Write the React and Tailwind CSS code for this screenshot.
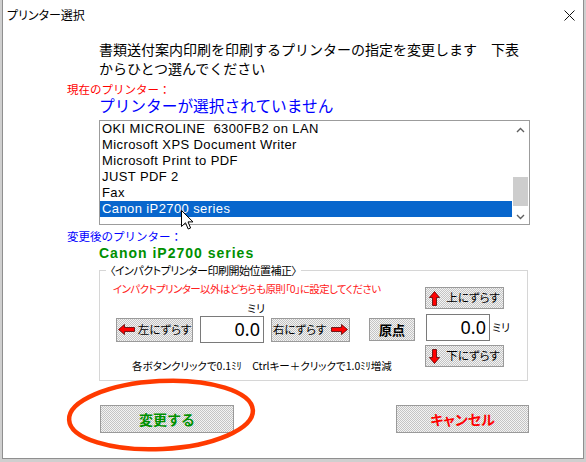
import React from "react";

const btnBase =
  "flex items-center justify-center whitespace-nowrap border border-[#9a9a9a] bg-[repeating-conic-gradient(#c4c4c4_0%_25%,#f3f3f3_0%_50%)] bg-[length:2px_2px]";

function ArrowLeft() {
  return (
    <svg width="17" height="11" viewBox="0 0 17 11" className="shrink-0">
      <polygon points="0.5,5.5 6.5,0.5 6.5,3.5 16.5,3.5 16.5,7.5 6.5,7.5 6.5,10.5" fill="#ff0000" stroke="#5a0000" strokeWidth="0.8" />
    </svg>
  );
}
function ArrowRight() {
  return (
    <svg width="17" height="11" viewBox="0 0 17 11" className="shrink-0">
      <polygon points="16.5,5.5 10.5,0.5 10.5,3.5 0.5,3.5 0.5,7.5 10.5,7.5 10.5,10.5" fill="#ff0000" stroke="#5a0000" strokeWidth="0.8" />
    </svg>
  );
}
function ArrowUp() {
  return (
    <svg width="11" height="15" viewBox="0 0 11 15" className="shrink-0">
      <polygon points="5.5,0.5 10.5,6.5 7.5,6.5 7.5,14.5 3.5,14.5 3.5,6.5 0.5,6.5" fill="#ff0000" stroke="#5a0000" strokeWidth="0.8" />
    </svg>
  );
}
function ArrowDown() {
  return (
    <svg width="11" height="15" viewBox="0 0 11 15" className="shrink-0">
      <polygon points="5.5,14.5 10.5,8.5 7.5,8.5 7.5,0.5 3.5,0.5 3.5,8.5 0.5,8.5" fill="#ff0000" stroke="#5a0000" strokeWidth="0.8" />
    </svg>
  );
}

const items = [
  "OKI MICROLINE\u00a0 6300FB2 on LAN",
  "Microsoft XPS Document Writer",
  "Microsoft Print to PDF",
  "JUST PDF 2",
  "Fax",
  "Canon iP2700 series",
];

export default function App() {
  return (
    <div className="relative w-[586px] h-[462px] overflow-hidden bg-[#cfcfcf] font-['Noto_Sans_CJK_JP',sans-serif] text-black">
      <div className="ml-[2px] w-[582px] h-[459px] bg-white border-l border-r border-b border-[#8f8f8f] flex flex-col">
        {/* title bar */}
        <div className="h-[30px] flex items-center justify-between pl-[4px] pr-[8px]">
          <span className="text-[12px] leading-[14px] [font-feature-settings:'palt']">プリンター選択</span>
          <svg width="11" height="11" viewBox="0 0 11 11">
            <path d="M0.5 0.5 L10.5 10.5 M10.5 0.5 L0.5 10.5" stroke="#111" strokeWidth="1" />
          </svg>
        </div>

        {/* instruction */}
        <div className="mt-[10px] pl-[96px] text-[14px] leading-[19px]">
          書類送付案内印刷を印刷するプリンターの指定を変更します　下表
          <br />
          からひとつ選んでください
        </div>

        <div className="mt-[4px] pl-[64px] text-[11.5px] leading-[14px] text-[#ff0000]">現在のプリンター：</div>
        <div className="mt-[1px] pl-[96px] text-[15.7px] leading-[17px] text-[#0000ff]">プリンターが選択されていません</div>

        {/* listbox */}
        <div className="mt-[6px] ml-[96px] w-[431px] h-[105px] border border-[#9c9c9c] flex">
          <div className="flex-1 flex flex-col font-['Liberation_Sans',sans-serif] text-[13px] tracking-[0.4px]">
            {items.map((t, i) => (
              <div
                key={i}
                className={
                  i === 5
                    ? "h-[16px] leading-[16px] pl-[2px] bg-[#0866cc] text-white whitespace-pre"
                    : "h-[16px] leading-[16px] pl-[2px] whitespace-pre"
                }
              >
                {t}
              </div>
            ))}
          </div>
          <div className="w-[17px] flex flex-col items-center">
            <div className="h-[17px] flex items-center justify-center">
              <svg width="9" height="6" viewBox="0 0 9 6">
                <path d="M1 5 L4.5 1.5 L8 5" fill="none" stroke="#606060" strokeWidth="1.4" />
              </svg>
            </div>
            <div className="h-[39px]" />
            <div className="w-[15px] h-[29px] bg-[#cdcdcd]" />
            <div className="flex-1 flex items-end justify-center pb-[4px]">
              <svg width="9" height="6" viewBox="0 0 9 6">
                <path d="M1 1 L4.5 4.5 L8 1" fill="none" stroke="#606060" strokeWidth="1.4" />
              </svg>
            </div>
          </div>
        </div>

        <div className="mt-[4px] pl-[64px] text-[11.5px] leading-[14px] text-[#0000ff]">変更後のプリンター：</div>
        <div className="mt-[1px] pl-[96px] font-['Liberation_Sans',sans-serif] font-bold text-[14px] leading-[18px] tracking-[1px] text-[#009000]">
          Canon iP2700 series
        </div>

        {/* group */}
        <fieldset className="mt-[1px] ml-[96px] w-[429px] h-[118px] border border-[#d6d6d6]">
          <legend className="ml-[6px] px-[4px] text-[11px] leading-[14px] tracking-[-0.5px] [font-feature-settings:'palt']">
            〈インパクトプリンター印刷開始位置補正〉
          </legend>
          <div className="flex">
            <div className="flex flex-col pl-[13px]">
              <div className="mt-[5px] text-[10.5px] leading-[14px] tracking-[-0.6px] text-[#ff2020] [font-feature-settings:'palt'] whitespace-nowrap">
                インパクトプリンター以外はどちらも原則「0」に設定してください
              </div>
              <div className="mt-[6px] pl-[134px] text-[11px] leading-[12px] [font-feature-settings:'palt']">ミリ</div>
              <div className="mt-[2px] flex items-center text-[11.5px] [font-feature-settings:'palt']">
                <div className={`${btnBase} ml-[3px] w-[77px] h-[24px] gap-[3px]`}>
                  <ArrowLeft />
                  <span>左にずらす</span>
                </div>
                <div className="ml-[7px] w-[64px] h-[27px] border border-[#7a7a7a] bg-white flex items-center justify-end pr-[3px] font-['Noto_Sans',sans-serif] text-[18px]">
                  0.0
                </div>
                <div className={`${btnBase} ml-[7px] w-[79px] h-[24px] gap-[5px]`}>
                  <span>右にずらす</span>
                  <ArrowRight />
                </div>
                <div className={`${btnBase} ml-[19px] w-[46px] h-[23px] font-bold text-[13px]`}>原点</div>
              </div>
              <div className="mt-[16px] pl-[19px] text-[10.5px] leading-[14px] [font-feature-settings:'palt'] whitespace-nowrap">
                各ボタンクリックで0.1ﾐﾘ　Ctrlキー＋クリックで1.0ﾐﾘ増減
              </div>
            </div>
            <div className="ml-[10px] flex flex-col text-[11.5px] [font-feature-settings:'palt']">
              <div className={`${btnBase} mt-[10px] w-[79px] h-[22px] gap-[6px]`}>
                <ArrowUp />
                <span>上にずらす</span>
              </div>
              <div className="mt-[5px] flex items-center">
                <div className="ml-[1px] w-[64px] h-[27px] border border-[#7a7a7a] bg-white flex items-center justify-end pr-[3px] font-['Noto_Sans',sans-serif] text-[18px]">
                  0.0
                </div>
                <span className="ml-[2px] text-[11px]">ミリ</span>
              </div>
              <div className={`${btnBase} mt-[4px] w-[79px] h-[22px] gap-[6px]`}>
                <ArrowDown />
                <span>下にずらす</span>
              </div>
            </div>
          </div>
        </fieldset>

        {/* bottom buttons */}
        <div className="mt-[24px] ml-[97px] w-[429px] flex justify-between text-[14px] font-bold">
          <div className={`${btnBase} w-[134px] h-[28px] text-[#009000]`}>変更する</div>
          <div className={`${btnBase} w-[133px] h-[28px] text-[#ff0000] [font-feature-settings:'palt']`}>キャンセル</div>
        </div>
      </div>

      {/* hand-drawn red ellipse annotation */}
      <svg className="absolute left-0 top-0 pointer-events-none" width="586" height="462" viewBox="0 0 586 462">
        <ellipse cx="161" cy="415" rx="92" ry="34" transform="rotate(-3 161 415)" fill="none" stroke="#ff3a00" strokeWidth="4.5" />
      </svg>

      {/* mouse cursor */}
      <svg className="absolute left-[181px] top-[210px] pointer-events-none" width="13" height="20" viewBox="0 0 13 20">
        <path d="M0.5 0.5 L0.5 16.5 L4.5 12.8 L7.2 19 L9.6 18 L7 11.9 L12 11.9 Z" fill="#ffffff" stroke="#000" strokeWidth="1" strokeLinejoin="round" />
      </svg>
    </div>
  );
}
